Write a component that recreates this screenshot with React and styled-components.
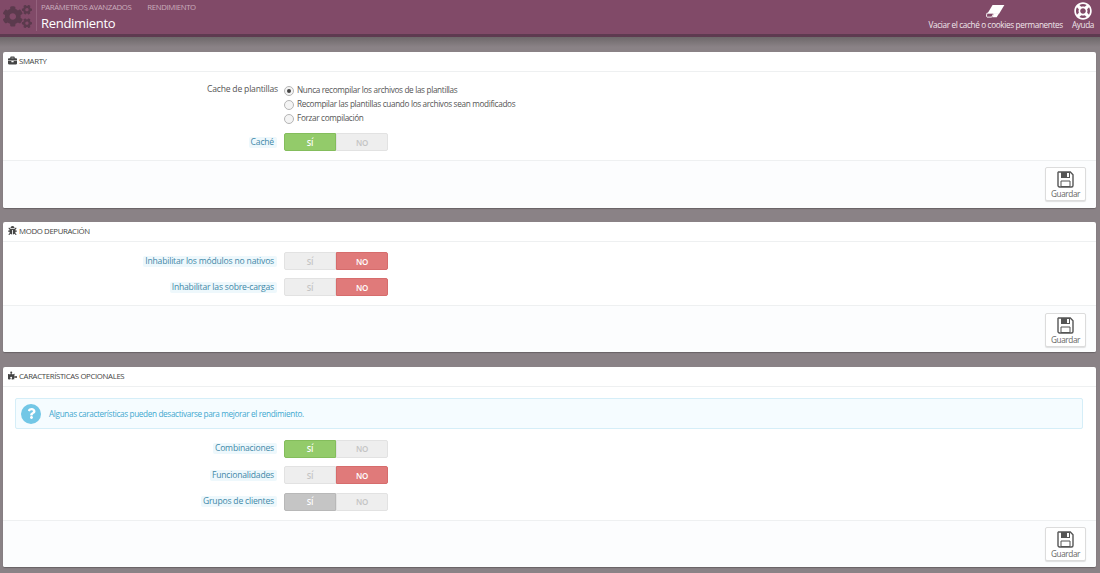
import React from 'react';
import styled, { createGlobalStyle } from 'styled-components';
import {
  FaCogs,
  FaRegLifeRing,
  FaBriefcase,
  FaBug,
  FaPuzzlePiece,
  FaQuestion
} from 'react-icons/fa';

const GlobalStyle = createGlobalStyle`
  html, body {
    margin: 0;
    padding: 0;
    height: 573px;
    overflow: hidden;
    background: #8a8286;
    font-family: "Open Sans", "Liberation Sans", sans-serif;
    color: #555;
  }
  * { box-sizing: border-box; }
`;

const Page = styled.div`
  width: 1100px;
  height: 573px;
  overflow: hidden;
`;

const Header = styled.header`
  height: 37px;
  display: flex;
  align-items: stretch;
  background: #814a68;
  border-bottom: 3px solid #5e3a50;
  color: #fff;
`;

const HeaderLogo = styled.div`
  width: 37px;
  padding: 2px 0 0 3px;
  color: #5b3a4d;
  font-size: 29px;
  line-height: 0;
  border-right: 1px solid #94617d;
  margin-bottom: 3px;
`;

const TitleBlock = styled.div`
  flex: 1;
  padding: 2px 0 0 4px;
`;

const Crumbs = styled.div`
  display: flex;
  gap: 16px;
  font-size: 7.8px;
  letter-spacing: -0.38px;
  line-height: 11px;
  color: #c9adbc;
  text-transform: uppercase;
`;

const PageTitle = styled.h1`
  margin: 2px 0 0;
  font-size: 13px;
  letter-spacing: -0.3px;
  line-height: 17px;
  font-weight: 400;
`;

const HeaderActions = styled.div`
  display: flex;
  gap: 9px;
  padding: 2px 6px 0 0;
`;

const HeaderAction = styled.a`
  display: flex;
  flex-direction: column;
  align-items: center;
  font-size: 8.2px;
  letter-spacing: -0.35px;
  line-height: 11px;
  color: #f0e6eb;
  svg {
    height: ${(p) => p.$iconHeight || 18}px;
    width: auto;
    margin: ${(p) => (p.$iconHeight ? '2px 0 1px' : '0 0 -1px')};
    color: #fff;
  }
`;

const Content = styled.main`
  display: flex;
  flex-direction: column;
  padding: 15px 4px 0 3px;
  background: linear-gradient(#6e686a 0, #8a8286 10px);
`;

const Panel = styled.section`
  margin-bottom: ${(p) => p.$after || 14}px;
  background: #fff;
  border-radius: 2px;
  box-shadow: 0 1px 1px rgba(0, 0, 0, 0.25);
`;

const PanelHeading = styled.h3`
  display: flex;
  align-items: center;
  gap: 2px;
  height: 20px;
  margin: 0;
  padding: 0 5px 2px;
  font-size: 7.8px;
  letter-spacing: -0.35px;
  font-weight: 400;
  color: #444;
  text-transform: uppercase;
  border-bottom: 1px solid #eef0f1;
  svg {
    font-size: 9px;
    color: #444;
  }
`;

const PanelBody = styled.div`
  display: flex;
  flex-direction: column;
  gap: ${(p) => p.$gap || 8.5}px;
  padding: ${(p) => p.$top || 10}px 13px 9px 12px;
`;

const Row = styled.div`
  display: grid;
  grid-template-columns: 263px 1fr;
  column-gap: 6px;
  align-items: ${(p) => (p.$top ? 'start' : 'center')};
  min-height: 18px;
`;

const LabelCell = styled.div`
  text-align: right;
  font-size: 8.6px;
  letter-spacing: -0.2px;
  line-height: 11px;
  color: #555;
`;

const HintLabel = styled.span`
  display: inline-block;
  padding: 0 3px 0 2px;
  margin-right: 1px;
  background: #eef8fc;
  border-radius: 2px;
  color: #3f88a8;
`;

const RadioList = styled.div`
  display: flex;
  flex-direction: column;
  gap: 3px;
`;

const RadioRow = styled.label`
  display: flex;
  align-items: center;
  gap: 3px;
  height: 11px;
  font-size: 8.2px;
  letter-spacing: -0.33px;
  color: #555;
`;

const RadioDot = styled.span`
  position: relative;
  top: 1px;
  width: 10px;
  height: 10px;
  border-radius: 50%;
  border: 1px solid #b5b5b5;
  background: #f4f4f4;
  display: flex;
  align-items: center;
  justify-content: center;
  &::after {
    content: '';
    display: ${(p) => (p.$on ? 'block' : 'none')};
    width: 4px;
    height: 4px;
    border-radius: 50%;
    background: #444;
  }
`;

const Switch = styled.div`
  display: flex;
  width: 104px;
  height: 18px;
`;

const SwitchSide = styled.span`
  flex: 1;
  display: flex;
  align-items: center;
  justify-content: center;
  font-size: 8px;
  font-weight: 600;
  letter-spacing: -0.2px;
  color: ${(p) => (p.$tone ? '#fff' : '#c4c4c4')};
  background: ${(p) =>
    ({ on: '#93cb6a', off: '#e07a7a', locked: '#c5c5c5' }[p.$tone] || '#eeeeee')};
  border: 1px solid
    ${(p) =>
      ({ on: '#84bd5c', off: '#d66c6c', locked: '#b8b8b8' }[p.$tone] || '#e2e2e2')};
  border-radius: ${(p) => (p.$left ? '2px 0 0 2px' : '0 2px 2px 0')};
`;

const PanelFooter = styled.div`
  display: flex;
  justify-content: flex-end;
  height: ${(p) => p.$height || 47}px;
  padding: ${(p) => p.$top || 6}px 10px 0 0;
  background: #fcfdfe;
  border-top: 1px solid #eef0f1;
  border-radius: 0 0 2px 2px;
`;

const SaveButton = styled.button`
  width: 41px;
  height: 34px;
  padding: 3px 0 0;
  display: flex;
  flex-direction: column;
  align-items: center;
  gap: 1px;
  background: #fff;
  border: 1px solid #dcdcdc;
  border-radius: 2px;
  box-shadow: 0 1px 1px rgba(0, 0, 0, 0.12);
  font-family: inherit;
  font-size: 8.2px;
  letter-spacing: -0.4px;
  line-height: 10px;
  color: #666;
`;

const Notice = styled.div`
  display: flex;
  align-items: center;
  gap: 8px;
  height: 31px;
  margin: 1px 0 2px;
  padding-left: 5px;
  background: #f5fcff;
  border: 1px solid #d5eef8;
  border-radius: 2px;
  font-size: 8.2px;
  letter-spacing: -0.35px;
  color: #3fa8cf;
`;

const NoticeIcon = styled.span`
  width: 20px;
  height: 20px;
  border-radius: 50%;
  background: #72c7e6;
  color: #fff;
  display: flex;
  align-items: center;
  justify-content: center;
  font-size: 11px;
`;

const EraserIcon = () => (
  <svg viewBox="0 0 22 16" fill="none">
    <path d="M7.5 1H21L15 11H1.5z" fill="#fff" />
    <path d="M1 10.5h8l-2.5 4.5H1.2L.5 14z" fill="#814a68" stroke="#fff" strokeWidth="1" />
    <path d="M9.5 10.5h5.5l-2.8 4.5H7z" fill="#fff" />
  </svg>
);

const SaveIcon = () => (
  <svg width="17" height="17" viewBox="0 0 17 17">
    <path
      d="M1.5 1h11.8L16 3.7V14.5a1.5 1.5 0 0 1-1.5 1.5h-12A1.5 1.5 0 0 1 1 14.5V1.5z"
      fill="none"
      stroke="#555"
      strokeWidth="1.4"
    />
    <path d="M4 1h9v6H4z" fill="#555" />
    <path d="M10 2h2v4h-2z" fill="#fff" />
    <path d="M4 10h9v5.5H4z" fill="none" stroke="#555" strokeWidth="1" />
  </svg>
);

const Toggle = ({ value }) => (
  <Switch>
    <SwitchSide $left $tone={value === 'on' ? 'on' : value === 'locked' ? 'locked' : null}>
      SÍ
    </SwitchSide>
    <SwitchSide $tone={value === 'off' ? 'off' : null}>NO</SwitchSide>
  </Switch>
);

const SwitchRow = ({ label, value }) => (
  <Row>
    <LabelCell>
      <HintLabel>{label}</HintLabel>
    </LabelCell>
    <Toggle value={value} />
  </Row>
);

const Footer = (props) => (
  <PanelFooter {...props}>
    <SaveButton type="button">
      <SaveIcon />
      Guardar
    </SaveButton>
  </PanelFooter>
);

export default function App() {
  return (
    <Page>
      <GlobalStyle />
      <Header>
        <HeaderLogo>
          <FaCogs />
        </HeaderLogo>
        <TitleBlock>
          <Crumbs>
            <span>Parámetros avanzados</span>
            <span>Rendimiento</span>
          </Crumbs>
          <PageTitle>Rendimiento</PageTitle>
        </TitleBlock>
        <HeaderActions>
          <HeaderAction $iconHeight={14}>
            <EraserIcon />
            Vaciar el caché o cookies permanentes
          </HeaderAction>
          <HeaderAction>
            <FaRegLifeRing />
            Ayuda
          </HeaderAction>
        </HeaderActions>
      </Header>
      <Content>
        <Panel>
          <PanelHeading>
            <FaBriefcase />
            Smarty
          </PanelHeading>
          <PanelBody $top={12} $gap={10}>
            <Row $top>
              <LabelCell>Cache de plantillas</LabelCell>
              <RadioList>
                <RadioRow>
                  <RadioDot $on />
                  Nunca recompilar los archivos de las plantillas
                </RadioRow>
                <RadioRow>
                  <RadioDot />
                  Recompilar las plantillas cuando los archivos sean modificados
                </RadioRow>
                <RadioRow>
                  <RadioDot />
                  Forzar compilación
                </RadioRow>
              </RadioList>
            </Row>
            <SwitchRow label="Caché" value="on" />
          </PanelBody>
          <Footer $height={48} />
        </Panel>
        <Panel $after={15}>
          <PanelHeading>
            <FaBug />
            Modo depuración
          </PanelHeading>
          <PanelBody $gap={8}>
            <SwitchRow label="Inhabilitar los módulos no nativos" value="off" />
            <SwitchRow label="Inhabilitar las sobre-cargas" value="off" />
          </PanelBody>
          <Footer $top={7} $height={47} />
        </Panel>
        <Panel>
          <PanelHeading>
            <FaPuzzlePiece />
            Características opcionales
          </PanelHeading>
          <PanelBody>
            <Notice>
              <NoticeIcon>
                <FaQuestion />
              </NoticeIcon>
              Algunas características pueden desactivarse para mejorar el rendimiento.
            </Notice>
            <SwitchRow label="Combinaciones" value="on" />
            <SwitchRow label="Funcionalidades" value="off" />
            <SwitchRow label="Grupos de clientes" value="locked" />
          </PanelBody>
          <Footer />
        </Panel>
      </Content>
    </Page>
  );
}
